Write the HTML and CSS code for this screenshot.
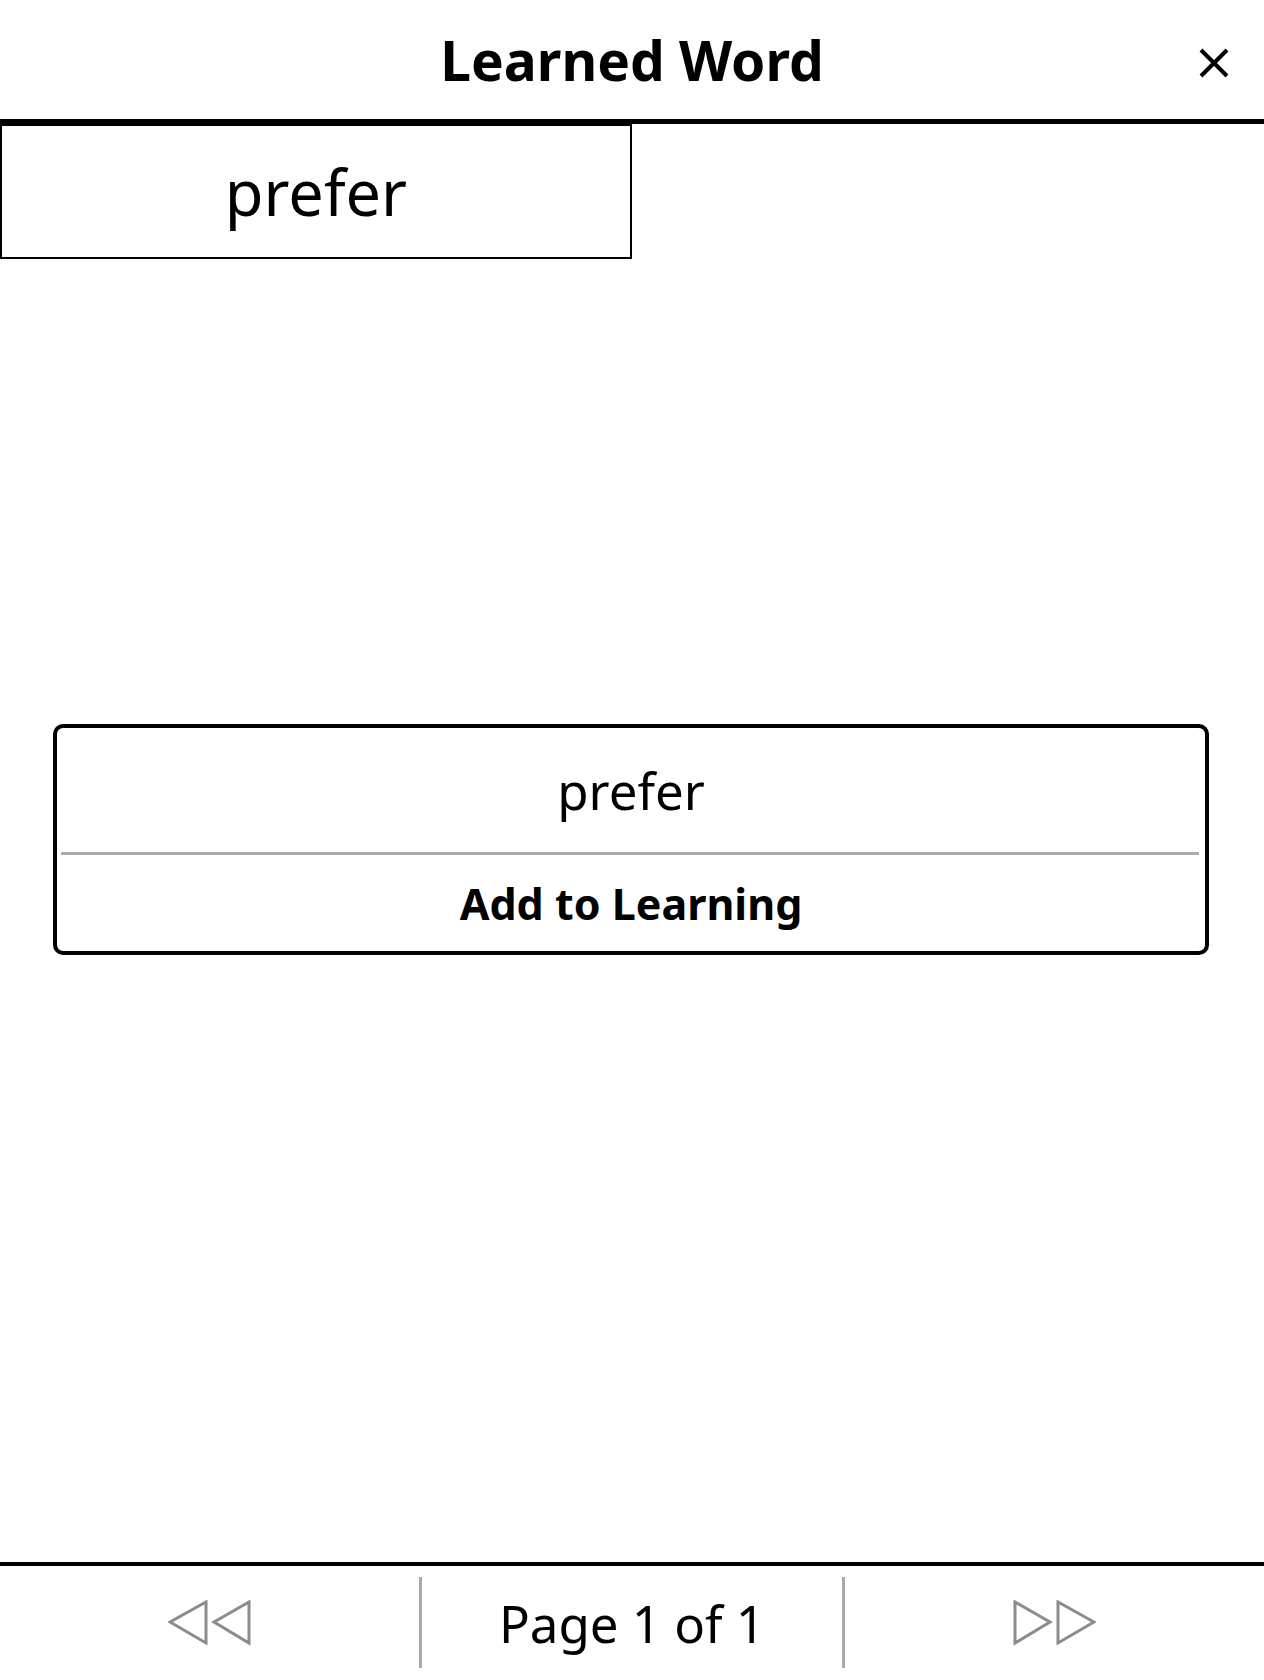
FILE: index.html
```html
<!DOCTYPE html>
<html lang="en">
<head>
<meta charset="utf-8">
<title>Learned Word</title>
<link rel="stylesheet" href="styles.css">
</head>
<body>
<div class="screen">
  <header class="header">
    <div class="header-side"></div>
    <h1 class="title">Learned Word</h1>
    <div class="header-side header-right">
      <button class="close" aria-label="Close">
        <svg width="30" height="30" viewBox="0 0 30 30"><path d="M2 2 L28 28 M28 2 L2 28" stroke="#000" stroke-width="4" fill="none"/></svg>
      </button>
    </div>
  </header>
  <main class="main">
    <div class="grid">
      <div class="word-cell">prefer</div>
    </div>
    <div class="popup">
      <div class="popup-word">prefer</div>
      <div class="popup-divider"></div>
      <div class="popup-action">Add to Learning</div>
    </div>
  </main>
  <footer class="footer">
    <div class="pager-cell">
      <svg width="84" height="46" viewBox="0 0 84 46"><polygon points="2,22 38,2 38,43" fill="none" stroke="#8c8c8c" stroke-width="3"/><polygon points="46,22 81,2 81,43" fill="none" stroke="#8c8c8c" stroke-width="3"/></svg>
    </div>
    <div class="pager-sep"></div>
    <div class="pager-cell pager-label">Page 1 of 1</div>
    <div class="pager-sep"></div>
    <div class="pager-cell">
      <svg width="84" height="46" viewBox="0 0 84 46"><polygon points="3,2 3,43 38,22" fill="none" stroke="#8c8c8c" stroke-width="3"/><polygon points="46,2 46,43 82,22" fill="none" stroke="#8c8c8c" stroke-width="3"/></svg>
    </div>
  </footer>
</div>
</body>
</html>
```
FILE: styles.css
```css
* { box-sizing: border-box; }
html, body { margin: 0; padding: 0; background: #fff; }
body { font-family: "Noto Sans", "Open Sans", sans-serif; color: #000; }
.screen { width: 1264px; height: 1680px; display: flex; flex-direction: column; }
.header {
  height: 124px;
  border-bottom: 5px solid #000;
  display: grid;
  grid-template-columns: 1fr auto 1fr;
  align-items: center;
  flex: none;
}
.title { margin: 0; font-size: 55px; font-weight: 700; line-height: 1.362; padding-top: 2px; }
.header-right { display: flex; justify-content: flex-end; }
.close { background: none; border: 0; padding: 0; margin: 7px 35px 0 0; width: 30px; height: 30px; display: block; }
.close svg { display: block; }
.main { flex: 1; position: relative; }
.grid { display: grid; grid-template-columns: 632px 1fr; }
.word-cell {
  height: 135px;
  border: 2px solid #000;
  display: flex; align-items: center; justify-content: center;
  font-size: 63px; line-height: 1.362;
}
.popup {
  position: absolute;
  top: 600px; left: 53px; right: 55px;
  border: 4px solid #000;
  border-radius: 10px;
  background: #fff;
}
.popup-word { height: 124px; line-height: 124px; text-align: center; font-size: 51px; }
.popup-divider { height: 3px; background: #aaa; margin: 0 6px 0 4px; }
.popup-action { height: 96px; line-height: 96px; padding-top: 1px; text-align: center; font-size: 43px; font-weight: 700; }
.footer {
  height: 118px;
  flex: none;
  border-top: 4px solid #000;
  display: flex;
  align-items: center;
}
.pager-cell { flex: 1; height: 114px; display: flex; align-items: center; justify-content: center; }
.pager-cell svg { display: block; }
.pager-label { font-size: 51px; line-height: 114px; }
.pager-sep { width: 3px; height: 91px; background: #aaa; flex: none; margin-top: -2px; }
```
